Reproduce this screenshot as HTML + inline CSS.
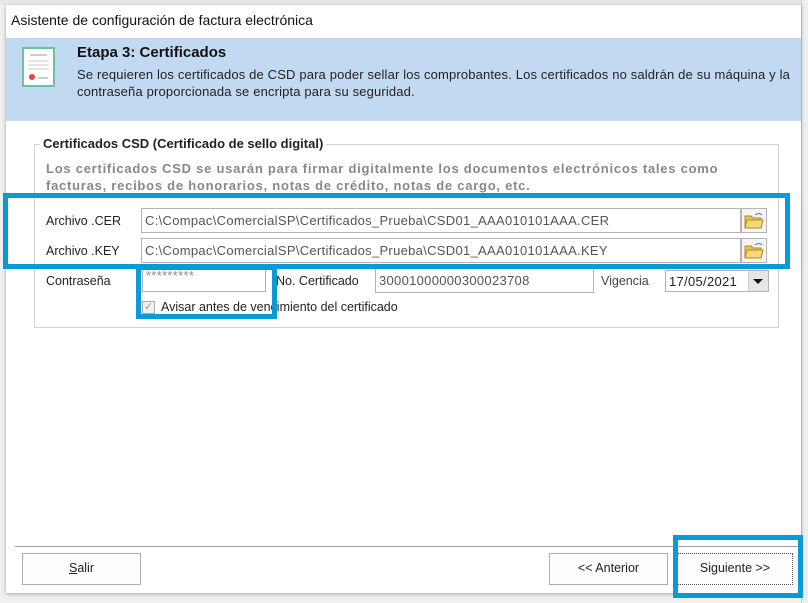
<!DOCTYPE html>
<html><head><meta charset="utf-8"><style>
*{box-sizing:border-box;margin:0;padding:0}
body{width:808px;height:603px;background:#f0f0f0;position:relative;overflow:hidden;font-family:"Liberation Sans",sans-serif;font-size:12px;color:#222}
.a{position:absolute}
.inp{position:absolute;border:1px solid #b4b4b4;background:#fff;color:#555;font-size:13px;letter-spacing:.3px;padding:4px 3px;white-space:nowrap;overflow:hidden}
.lbl{position:absolute;font-size:12.5px;color:#222}
.btn{position:absolute;border:1px solid #adadad;background:#fdfdfd;text-align:center;font-size:12.5px;color:#222;line-height:29px}
.hl{position:absolute;border:5px solid #0a9ad8}
</style></head><body>
<div class="a" style="left:0;top:0;width:808px;height:5px;background:#e8e8e8"></div>
<div class="a" style="left:801px;top:0;width:7px;height:603px;background:#eee;border-left:1px solid #ccc"></div>
<div class="a" style="left:6px;top:5px;width:795px;height:588px;background:#fff;box-shadow:0 1px 4px rgba(0,0,0,.3)"></div>
<div class="a" style="left:11px;top:12px;font-size:14px;color:#111">Asistente de configuración de factura electrónica</div>
<div class="a" style="left:6px;top:38px;width:795px;height:83px;background:#c2daf1"></div>
<svg class="a" style="left:22px;top:47px" width="34" height="41"><rect x="1" y="1" width="31" height="38" fill="#fff" stroke="#6cc0a0" stroke-width="2"/><line x1="8" y1="8" x2="25" y2="8" stroke="#999"/><line x1="6" y1="14" x2="27" y2="14" stroke="#ccc"/><line x1="6" y1="18" x2="27" y2="18" stroke="#ccc"/><line x1="6" y1="22" x2="27" y2="22" stroke="#ccc"/><circle cx="10" cy="30" r="3" fill="#d44"/><line x1="16" y1="31" x2="26" y2="31" stroke="#999"/></svg>
<div class="a" style="left:77px;top:44px;font-size:15px;font-weight:bold;color:#111">Etapa 3: Certificados</div>
<div class="a" style="left:77px;top:66px;font-size:13px;letter-spacing:.15px;line-height:17px;color:#222;white-space:nowrap">Se requieren los certificados de CSD para poder sellar los comprobantes. Los certificados no saldrán de su máquina y la<br>contraseña proporcionada se encripta para su seguridad.</div>
<div class="a" style="left:34px;top:144px;width:745px;height:184px;border:1px solid #d0d0d0"></div>
<div class="a" style="left:40px;top:136px;background:#fff;padding:0 3px;font-weight:bold;font-size:13px;color:#222">Certificados CSD (Certificado de sello digital)</div>
<div class="a" style="left:46px;top:160px;font-weight:bold;color:#888;font-size:13px;letter-spacing:.75px;line-height:17px;white-space:nowrap">Los certificados CSD se usarán para firmar digitalmente los documentos electrónicos tales como<br>facturas, recibos de honorarios, notas de crédito, notas de cargo, etc.</div>
<div class="lbl" style="left:46px;top:214px">Archivo .CER</div>
<div class="inp" style="left:141px;top:208px;width:600px;height:25px">C:\Compac\ComercialSP\Certificados_Prueba\CSD01_AAA010101AAA.CER</div>
<div class="lbl" style="left:46px;top:244px">Archivo .KEY</div>
<div class="inp" style="left:141px;top:238px;width:600px;height:25px">C:\Compac\ComercialSP\Certificados_Prueba\CSD01_AAA010101AAA.KEY</div>
<div class="a" style="left:741px;top:208px;width:26px;height:25px;border:1px solid #b4b4b4;background:#f4f4f4"></div>
<div class="a" style="left:741px;top:238px;width:26px;height:25px;border:1px solid #b4b4b4;background:#f4f4f4"></div>
<svg class="a" style="left:744px;top:211px" width="20" height="19"><path d="M1 5h6l2 2h8v10H1z" fill="#e8c45a" stroke="#b08a20"/><path d="M3 9h16l-2 8H1z" fill="#f6d87a" stroke="#b08a20"/><path d="M11 4q4-3 7 0" fill="none" stroke="#4a7fc0"/></svg>
<svg class="a" style="left:744px;top:241px" width="20" height="19"><path d="M1 5h6l2 2h8v10H1z" fill="#e8c45a" stroke="#b08a20"/><path d="M3 9h16l-2 8H1z" fill="#f6d87a" stroke="#b08a20"/><path d="M11 4q4-3 7 0" fill="none" stroke="#4a7fc0"/></svg>
<div class="lbl" style="left:46px;top:274px">Contraseña</div>
<div class="inp" style="left:142px;top:266px;width:124px;height:26px;color:#888;padding-top:1px">*********</div>
<div class="lbl" style="left:276px;top:274px">No. Certificado</div>
<div class="inp" style="left:375px;top:268px;width:219px;height:25px">30001000000300023708</div>
<div class="lbl" style="left:601px;top:274px;color:#444">Vigencia</div>
<div class="inp" style="left:665px;top:270px;width:104px;height:22px;color:#222;padding-top:3px">17/05/2021</div>
<div class="a" style="left:748px;top:271px;width:20px;height:20px;background:#e6e6e6;border-left:1px solid #ccc"></div>
<div class="a" style="left:753px;top:279px;width:0;height:0;border:5px solid transparent;border-top:5px solid #111;border-bottom:0"></div>
<div class="a" style="left:142px;top:301px;width:13px;height:13px;border:1px solid #aaa;background:#f0f0f0;color:#999;font-size:11px;line-height:11px;text-align:center">✓</div>
<div class="lbl" style="left:161px;top:300px">Avisar antes de vencimiento del certificado</div>
<div class="a" style="left:15px;top:546px;width:786px;height:1px;background:#a0a0a0"></div>
<div class="btn" style="left:22px;top:553px;width:119px;height:32px"><u>S</u>alir</div>
<div class="btn" style="left:549px;top:553px;width:119px;height:32px">&lt;&lt; Anterior</div>
<div class="btn" style="left:677px;top:553px;width:116px;height:32px;border:1px dotted #555">Siguiente &gt;&gt;</div>
<div class="hl" style="left:3px;top:193px;width:787px;height:76px"></div>
<div class="hl" style="left:136px;top:265px;width:141px;height:54px"></div>
<div class="hl" style="left:673px;top:535px;width:130px;height:63px"></div>
</body></html>
